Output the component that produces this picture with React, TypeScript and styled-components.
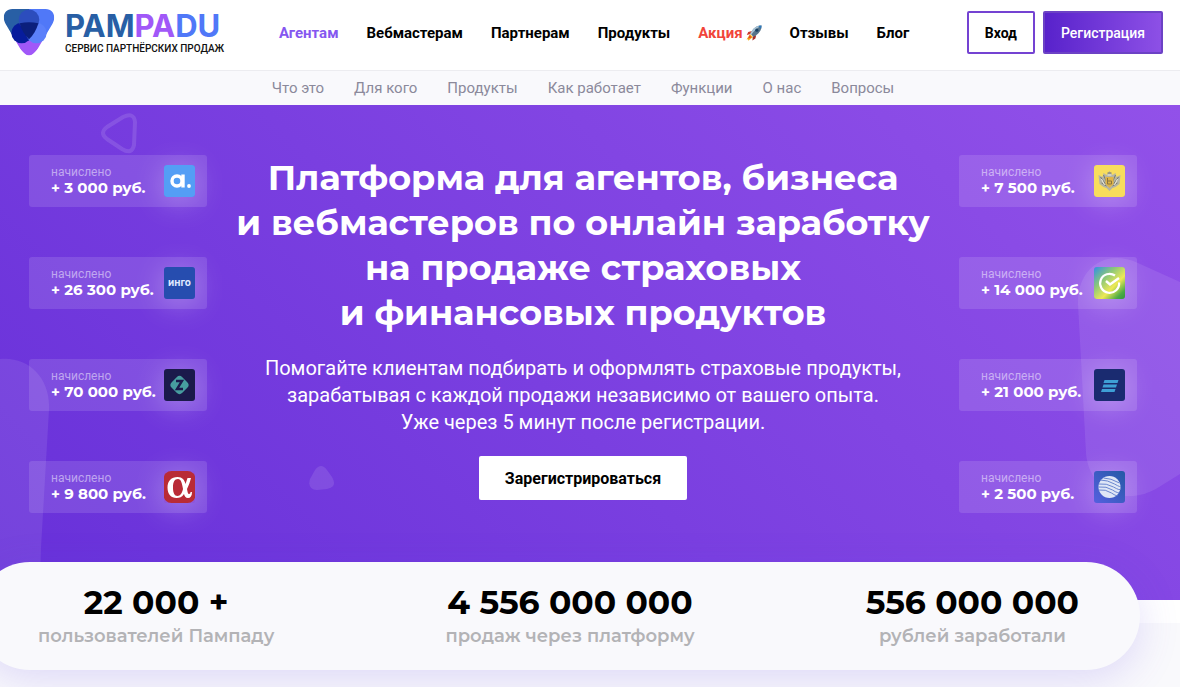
import React from "react";
import styled, { createGlobalStyle } from "styled-components";

const display = `Montserrat, Inter, "Open Sans", sans-serif`;
const text = `Roboto, "Liberation Sans", sans-serif`;

const GlobalStyle = createGlobalStyle`
  * { box-sizing: border-box; }
  body { margin: 0; font-family: ${text}; background: #f9f9fc; color: #000; overflow-x: hidden; }
  h1, p { margin: 0; }
  a { color: inherit; text-decoration: none; }
  button { font-family: inherit; cursor: pointer; }
`;

const Header = styled.header`
  display: flex;
  align-items: center;
  height: 70px;
  padding: 0 17px 5px 3px;
  background: #fff;
`;

const Logo = styled.a`
  display: flex;
  align-items: center;
  gap: 10px;
  width: 216px;
  flex: none;

  svg { flex: none; }
`;

const Wordmark = styled.span`
  display: flex;
  flex-direction: column;
  white-space: nowrap;
`;

const BrandName = styled.span`
  font: 700 31px/32px Inter, sans-serif;
`;

const BrandPart = styled.span<{ $color: string }>`
  color: ${(p) => p.$color};
`;

const Tagline = styled.span`
  font: 500 10px/14px ${text};
  color: #111;
`;

const MainNav = styled.nav`
  display: flex;
  gap: 28px;
  margin-left: 60px;
`;

const NavLink = styled.a<{ $color?: string }>`
  display: flex;
  align-items: center;
  gap: 3px;
  font-weight: 700;
  font-size: 15px;
  line-height: 20px;
  white-space: nowrap;
  color: ${(p) => p.$color ?? "#000"};
`;

const Actions = styled.div`
  display: flex;
  gap: 8px;
  margin-left: auto;
`;

const HeaderButton = styled.button<{ $filled?: boolean }>`
  height: 43px;
  padding: 0 16px;
  border: 2px solid ${(p) => (p.$filled ? "#6c42c5" : "#7443d2")};
  border-radius: 2px;
  font-size: 14px;
  font-weight: ${(p) => (p.$filled ? 500 : 700)};
  color: ${(p) => (p.$filled ? "#fff" : "#000")};
  background: ${(p) => (p.$filled ? "linear-gradient(90deg, #5822cb, #8d50e6)" : "#fff")};
`;

const SubNav = styled.nav`
  display: flex;
  justify-content: center;
  gap: 30px;
  height: 35px;
  padding-right: 14px;
  border-top: 1px solid #ececf0;
  background: #f9f9fc;
  color: #8b899b;
  font-size: 15px;
  line-height: 35px;
`;

const Hero = styled.section`
  position: relative;
  display: grid;
  grid-template-columns: 178px 1fr 178px;
  padding: 50px 43px 87px 29px;
  overflow: hidden;
  background: linear-gradient(45deg, #6730d9 0%, #7a3fe0 45%, #9251e9 100%);
`;

const Shape = styled.svg<{ $side: "left" | "right"; $x: number; $y: number }>`
  position: absolute;
  ${(p) => p.$side}: ${(p) => p.$x}px;
  top: ${(p) => p.$y}px;
`;

const Payouts = styled.div`
  position: relative;
  display: flex;
  flex-direction: column;
  gap: 50px;
`;

const PayoutCard = styled.div`
  display: flex;
  align-items: center;
  justify-content: space-between;
  height: 52px;
  padding: 0 12px 0 22px;
  border-radius: 3px;
  background: rgba(255, 255, 255, 0.12);
  white-space: nowrap;
`;

const PayoutText = styled.div`
  padding-bottom: 4px;
`;

const PayoutLabel = styled.p`
  font-size: 12px;
  line-height: 16px;
  color: rgba(255, 255, 255, 0.5);
`;

const PayoutSum = styled.p`
  font: 700 15px/15px ${display};
  color: #fff;
`;

const Brand = styled.svg`
  flex: none;
  border-radius: 3px;
  box-shadow: 0 4px 30px rgba(255, 255, 255, 0.34);
`;

const Pitch = styled.div`
  position: relative;
  display: flex;
  flex-direction: column;
  align-items: center;
  gap: 20px;
  text-align: center;
  color: #fff;
  white-space: nowrap;
`;

const Title = styled.h1`
  font: 700 35px/45px ${display};
`;

const Lead = styled.p`
  font-size: 20px;
  line-height: 27px;
`;

const JoinButton = styled.button`
  height: 44px;
  padding: 0 26px;
  border: 0;
  border-radius: 2px;
  background: #fff;
  color: #000;
  font-size: 16px;
  font-weight: 700;
`;

const StatsBand = styled.section`
  background: linear-gradient(#fff 23px, #f9f9fc 23px);
  padding-bottom: 17px;
`;

const Stats = styled.div`
  position: relative;
  display: flex;
  justify-content: space-between;
  margin: 0 40px -38px -24px;
  top: -38px;
  height: 108px;
  padding: 20px 61px 0 62px;
  border-radius: 54px;
  background: #f9f9fc;
  box-shadow: 0 10px 40px rgba(100, 70, 230, 0.18);
  text-align: center;
  white-space: nowrap;
`;

const StatValue = styled.p`
  font: 700 33px/40px ${display};
`;

const StatLabel = styled.p`
  font: 600 18px/28px ${display};
  color: #b3b3b6;
`;

const Rocket = () => (
  <svg width="16" height="16" viewBox="0 0 16 16" aria-hidden="true">
    <path d="M4 9 0.5 14.5 2 14.2 2.3 15.7 7 12Z" fill="#f6b21b" />
    <path d="M3.6 10.3 2 13.8 5.6 12.3Z" fill="#e8402a" />
    <path d="M6 6 2.2 7 .8 10 4.6 9Z" fill="#c93a2d" />
    <path d="M10.2 10 9.4 13.6 6.4 15.4 6.8 11.5Z" fill="#a62c26" />
    <path d="M15.5.5C11 .4 7.2 3 4.2 8.6L7.4 11.8C13 9 15.8 5 15.5.5Z" fill="#56748b" />
    <path d="M15.5.5C11 .4 7.2 3 4.2 8.6L5.3 9.7C8 6 11 3 15.5.5Z" fill="#a9c3d4" />
    <path d="M15.5.5 12.2.9 15.1 3.8Z" fill="#2c79bd" />
    <circle cx="10.8" cy="5.2" r="1.6" fill="#173f62" />
  </svg>
);

const LogoMark = () => (
  <svg width="52" height="47" viewBox="0 0 52 48" aria-hidden="true">
    <defs>
      <clipPath id="mark"><path d="M9 0H43C51 0 54 8 50 15L34 42C30 49 22 49 18 42L2 15C-2 8 1 0 9 0Z" /></clipPath>
    </defs>
    <g clipPath="url(#mark)">
      <path d="M0 0H26V24L10 34 0 20Z" fill="#285fa5" />
      <path d="M26 0H52V20L42 34 26 24Z" fill="#5078f8" />
      <path d="M10 34 26 24 42 34 26 50Z" fill="#a158f8" />
    </g>
    <circle cx="18.500" cy="24.500" r="10.500" fill="#071c9c" />
    <circle cx="33.500" cy="24.500" r="10.500" fill="#5b80fa" />
    <circle cx="26" cy="11" r="10.500" fill="#2c4dbd" />
    <path d="M16.500 14.500Q26 12.500 35.500 14.500 33 24 26 31 19 24 16.500 14.500Z" fill="#0b1f7c" />
  </svg>
);

type BrandId = "absolut" | "ingo" | "zetta" | "alfa" | "tinkoff" | "sber" | "stripes" | "globe";

const brandArt: Record<BrandId, React.ReactNode> = {
  absolut: (
    <>
      <rect width="32" height="32" fill="#549ef5" />
      <circle cx="13.500" cy="16" r="5" fill="none" stroke="#fff" strokeWidth="3.400" />
      <path d="M19.500 9.500V22.500" stroke="#fff" strokeWidth="3.400" />
      <circle cx="25.500" cy="21" r="1.900" fill="#fff" />
    </>
  ),
  ingo: (
    <>
      <rect width="32" height="32" fill="#264daf" />
      <text x="16" y="19" textAnchor="middle" fill="#dfe8ff" fontFamily="Inter, sans-serif" fontSize="10" fontWeight="700">инго</text>
    </>
  ),
  zetta: (
    <>
      <rect width="32" height="32" fill="#1b1a4b" />
      <rect x="8.500" y="8.500" width="15" height="15" rx="4" fill="#479d9f" transform="rotate(45 16 16)" />
      <path d="M12.500 12H18.500L13.500 20H19.500" fill="none" stroke="#1b1a4b" strokeWidth="2.400" />
    </>
  ),
  alfa: (
    <>
      <rect width="32" height="32" fill="#9057dc" />
      <rect width="32" height="32" rx="8" fill="#b92b36" />
      <path
        fillRule="evenodd"
        fill="#fff"
        d="M14 6C19 6 21 9 22 13L24 7H27.500C26.500 11 25 15 23.500 18 24 21 24.500 23 25.500 23 26.500 23 27 22 27 21H28.500C28.500 25 27 27 24.500 27 22 27 21 25 20.500 23 18.500 26 16 27 13 27 7.500 27 4 23 4 16.500S8 6 14 6ZM14.500 8C11 8 9.500 11 9.500 16.500S11 25 14 25C17 25 18.500 22 19.500 18 18.500 12 17.500 8 14.500 8Z"
      />
    </>
  ),
  tinkoff: (
    <>
      <rect width="32" height="32" fill="#f8dd5c" />
      <path d="M5 10 9 12 10 8 13 10 16 6 19 10 22 8 23 12 27 10 26 19 22 22 19 23 16 26 13 23 10 22 6 19Z" fill="#b5b4a4" />
      <path d="M7 12 12 19M10 10 13 17M25 12 20 19M22 10 19 17M8 18 13 21M24 18 19 21M14 8H18" stroke="#77786f" fill="none" />
      <path d="M8 14 11 20M24 14 21 20M14 10H18" stroke="#eeece0" fill="none" />
      <path d="M12 12H20V19L16 23 12 19Z" fill="#dfb347" />
      <path d="M14 13V19H18V16H14" stroke="#8b7440" fill="none" />
    </>
  ),
  sber: (
    <>
      <defs>
        <linearGradient id="sber" x1="0" y1="0" x2="1" y2="1">
          <stop offset="0" stopColor="#2f8fe8" />
          <stop offset=".35" stopColor="#8dc878" />
          <stop offset=".62" stopColor="#eee955" />
          <stop offset=".85" stopColor="#4cab45" />
          <stop offset="1" stopColor="#32953d" />
        </linearGradient>
      </defs>
      <rect width="32" height="32" fill="url(#sber)" />
      <path d="M21.500 8.500A9.500 9.500 0 1 0 25.600 15.500" fill="none" stroke="#fff" strokeWidth="2.200" />
      <path d="M12.500 14 16.500 17.500 25.500 11" fill="none" stroke="#fff" strokeWidth="2.400" />
    </>
  ),
  stripes: (
    <>
      <rect width="32" height="32" fill="#1a2b70" />
      <path d="M11 11H25L24 14H10ZM10 15.500H23.500L22.500 18.500H9ZM8.500 20H22L21 23H7.500Z" fill="#3e9fd6" />
    </>
  ),
  globe: (
    <>
      <defs>
        <linearGradient id="globe" x1="0" y1="1" x2="1" y2="0">
          <stop offset="0" stopColor="#5560e0" />
          <stop offset="1" stopColor="#2459a5" />
        </linearGradient>
      </defs>
      <rect width="32" height="32" fill="url(#globe)" />
      <circle cx="16" cy="16" r="11" fill="#dfe6f6" />
      <path d="M7 9Q14 9 21 13T27 15M5 13Q13 12 20 16T27 18M5 16Q13 15 19 19T26 21M5 19Q12 18 18 22T24 24M10 7Q17 7 26 12" fill="none" stroke="#6a86cf" strokeWidth="1" />
    </>
  ),
};

const leftPayouts: [string, BrandId][] = [
  ["+ 3 000 руб.", "absolut"],
  ["+ 26 300 руб.", "ingo"],
  ["+ 70 000 руб.", "zetta"],
  ["+ 9 800 руб.", "alfa"],
];
const rightPayouts: [string, BrandId][] = [
  ["+ 7 500 руб.", "tinkoff"],
  ["+ 14 000 руб.", "sber"],
  ["+ 21 000 руб.", "stripes"],
  ["+ 2 500 руб.", "globe"],
];

const PayoutColumn = ({ items }: { items: [string, BrandId][] }) => (
  <Payouts>
    {items.map(([sum, brand]) => (
      <PayoutCard key={brand}>
        <PayoutText>
          <PayoutLabel>начислено</PayoutLabel>
          <PayoutSum>{sum}</PayoutSum>
        </PayoutText>
        <Brand width="31" height="32" viewBox="0 0 32 32" preserveAspectRatio="xMidYMid slice" aria-hidden="true">
          {brandArt[brand]}
        </Brand>
      </PayoutCard>
    ))}
  </Payouts>
);

const sections = ["Что это", "Для кого", "Продукты", "Как работает", "Функции", "О нас", "Вопросы"];

const stats = [
  ["22 000 +", "пользователей Пампаду"],
  ["4 556 000 000", "продаж через платформу"],
  ["556 000 000", "рублей заработали"],
];

export default function App() {
  return (
    <>
      <GlobalStyle />
      <Header>
        <Logo href="#">
          <LogoMark />
          <Wordmark>
            <BrandName>
              <BrandPart $color="#285fa5">PAM</BrandPart>
              <BrandPart $color="#a158f8">PA</BrandPart>
              <BrandPart $color="#5078f8">DU</BrandPart>
            </BrandName>
            <Tagline>СЕРВИС ПАРТНЁРСКИХ ПРОДАЖ</Tagline>
          </Wordmark>
        </Logo>
        <MainNav>
          <NavLink href="#" $color="#8557f0">Агентам</NavLink>
          <NavLink href="#">Вебмастерам</NavLink>
          <NavLink href="#">Партнерам</NavLink>
          <NavLink href="#">Продукты</NavLink>
          <NavLink href="#" $color="#f1443a">Акция <Rocket /></NavLink>
          <NavLink href="#">Отзывы</NavLink>
          <NavLink href="#">Блог</NavLink>
        </MainNav>
        <Actions>
          <HeaderButton>Вход</HeaderButton>
          <HeaderButton $filled>Регистрация</HeaderButton>
        </Actions>
      </Header>
      <SubNav>
        {sections.map((s) => <a href="#" key={s}>{s}</a>)}
      </SubNav>
      <Hero>
        <Shape $side="left" $x={0} $y={253} width="50" height="243" viewBox="0 0 50 243" aria-hidden="true">
          <path d="M0 1C28-2 51 20 49 52L41 190Q41 220 34 243H0Z" fill="#fff" fillOpacity=".09" />
        </Shape>
        <Shape $side="left" $x={100} $y={7} width="38" height="42" viewBox="0 0 38 42" aria-hidden="true">
          <path d="M7 15 23 5Q34 0 35 10L34 33Q32 43 22 37L7 27Q-1 21 7 15Z" fill="none" stroke="#fff" strokeOpacity=".12" strokeWidth="4" />
        </Shape>
        <Shape $side="left" $x={309} $y={360} width="26" height="26" viewBox="0 0 26 26" aria-hidden="true">
          <path d="M6 5Q12-3 18 5L23 12Q29 22 18 24L8 25Q-2 24 1 14Z" fill="#fff" fillOpacity=".11" />
        </Shape>
        <Shape $side="right" $x={0} $y={152} width="103" height="240" viewBox="0 0 103 240" aria-hidden="true">
          <path d="M103 25 61 6C28-9 0 12 1 47L9 196C12 234 49 251 82 230L103 217Z" fill="#fff" fillOpacity=".09" />
        </Shape>
        <PayoutColumn items={leftPayouts} />
        <Pitch>
          <Title>
            Платформа для агентов, бизнеса<br />и вебмастеров по онлайн заработку<br />на продаже страховых<br />и финансовых продуктов
          </Title>
          <Lead>
            Помогайте клиентам подбирать и оформлять страховые продукты,<br />зарабатывая с каждой продажи независимо от вашего опыта.<br />Уже через 5 минут после регистрации.
          </Lead>
          <JoinButton>Зарегистрироваться</JoinButton>
        </Pitch>
        <PayoutColumn items={rightPayouts} />
      </Hero>
      <StatsBand>
        <Stats>
          {stats.map(([value, label]) => (
            <div key={label}>
              <StatValue>{value}</StatValue>
              <StatLabel>{label}</StatLabel>
            </div>
          ))}
        </Stats>
      </StatsBand>
    </>
  );
}
